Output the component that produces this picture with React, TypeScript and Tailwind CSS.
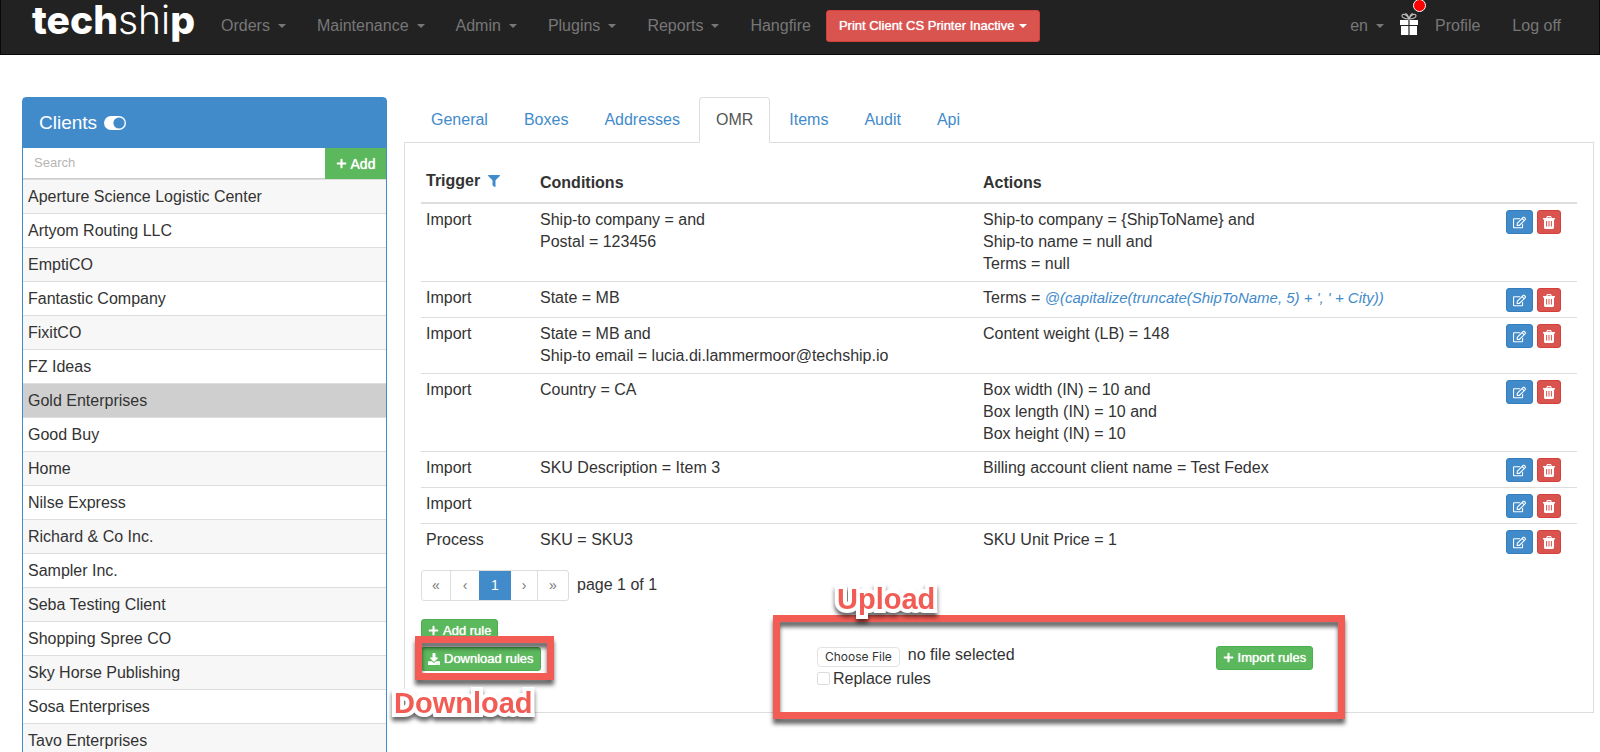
import { useState } from "react";
import type { ReactNode } from "react";
import { FaDownload, FaFilter, FaPlus, FaRegEdit } from "react-icons/fa";
import { clsx } from "clsx";

interface Rule {
  trigger: string;
  conditions: string[];
  actions: ReactNode[];
}

const menus = ["Orders", "Maintenance", "Admin", "Plugins", "Reports"];

const clients = [
  "Aperture Science Logistic Center",
  "Artyom Routing LLC",
  "EmptiCO",
  "Fantastic Company",
  "FixitCO",
  "FZ Ideas",
  "Gold Enterprises",
  "Good Buy",
  "Home",
  "Nilse Express",
  "Richard & Co Inc.",
  "Sampler Inc.",
  "Seba Testing Client",
  "Shopping Spree CO",
  "Sky Horse Publishing",
  "Sosa Enterprises",
  "Tavo Enterprises",
];

const tabs = ["General", "Boxes", "Addresses", "OMR", "Items", "Audit", "Api"];

const rules: Rule[] = [
  {
    trigger: "Import",
    conditions: ["Ship-to company = and", "Postal = 123456"],
    actions: ["Ship-to company = {ShipToName} and", "Ship-to name = null and", "Terms = null"],
  },
  {
    trigger: "Import",
    conditions: ["State = MB"],
    actions: [
      <>
        Terms ={" "}
        <em className="text-[15px] text-[#428bca]">
          @(capitalize(truncate(ShipToName, 5) + ', ' + City))
        </em>
      </>,
    ],
  },
  {
    trigger: "Import",
    conditions: ["State = MB and", "Ship-to email = lucia.di.lammermoor@techship.io"],
    actions: ["Content weight (LB) = 148"],
  },
  {
    trigger: "Import",
    conditions: ["Country = CA"],
    actions: ["Box width (IN) = 10 and", "Box length (IN) = 10 and", "Box height (IN) = 10"],
  },
  {
    trigger: "Import",
    conditions: ["SKU Description = Item 3"],
    actions: ["Billing account client name = Test Fedex"],
  },
  { trigger: "Import", conditions: [], actions: [] },
  { trigger: "Process", conditions: ["SKU = SKU3"], actions: ["SKU Unit Price = 1"] },
];

const Caret = () => (
  <span className="inline-block border-x-4 border-t-4 border-x-transparent border-t-current" />
);

const GiftIcon = () => (
  <svg viewBox="0 0 20 24" className="h-6 w-5" fill="#fff">
    <path
      d="M10 7C8 2 3 1 3 4c0 2 4 3 7 3s7-1 7-3c0-3-5-2-7 3zM10 7C9 3 7 1 6 2M10 7c1-4 3-6 4-5"
      fill="none"
      stroke="#bbb"
      strokeWidth="1.2"
    />
    <path d="M1 8h8.4v5H1zM10.6 8H19v5h-8.4zM2 14h7.4v9H2zM10.6 14H18v9h-7.4z" />
  </svg>
);

const ToggleIcon = () => (
  <svg viewBox="0 0 22 14" className="h-[14px] w-[22px]">
    <rect width="22" height="14" rx="7" fill="#fff" />
    <circle cx="15" cy="7" r="5.6" fill="#428bca" />
  </svg>
);

const TrashIcon = () => (
  <svg viewBox="0 0 12 13" className="h-[13px] w-3" fill="#fff">
    <path d="M4 0h4l.8 2H12v1.4h-1V11.400a1.600 1.600 0 0 1-1.600 1.600H2.600A1.600 1.600 0 0 1 1 11.400V3.400H0V2h3.200z" />
    <path d="M4.600 1.200h2.800l.3.8H4.300z" fill="#d9534f" />
    <path d="M3.600 5v5.500M6 5v5.500M8.400 5v5.500" stroke="#d9534f" strokeWidth="1" />
  </svg>
);

const NavBar = () => (
  <nav className="flex h-[55px] shrink-0 items-center border border-t-0 border-[#090909] bg-[#222] pr-[38px] pb-[2px] pl-[31px] text-[#777]">
    <a
      href="#"
      className="-mt-[3px] flex w-[174px] items-baseline self-start font-[Inter,sans-serif] text-[39px] leading-[46px] text-white"
    >
      <span className="font-extrabold">tech</span>
      <span className="font-light">shi</span>
      <span className="font-extrabold">p</span>
    </a>
    <div className="flex items-center gap-px">
      {menus.map((menu) => (
        <button key={menu} type="button" className="flex items-center gap-2 px-[15px]">
          {menu} <Caret />
        </button>
      ))}
      <a href="#" className="px-[15px]">
        Hangfire
      </a>
    </div>
    <button
      type="button"
      className="flex h-8 items-center gap-[5px] rounded-[3px] border border-[#d43f3a] bg-[#d9534f] px-3 text-[13px] text-white [text-shadow:0_0_1px_white]"
    >
      Print Client CS Printer Inactive <Caret />
    </button>
    <button type="button" className="ml-auto flex items-center gap-2 px-[15px]">
      en <Caret />
    </button>
    <a href="#" aria-label="What's new" className="relative mb-1">
      <GiftIcon />
      <span className="absolute -top-[13px] left-[14px] size-[13px] rounded-full border border-white bg-[#f00]" />
    </a>
    <a href="#" className="px-4">
      Profile
    </a>
    <a href="#" className="pl-4">
      Log off
    </a>
  </nav>
);

const ClientList = () => {
  const [selected, setSelected] = useState("Gold Enterprises");

  return (
    <aside className="w-[365px] shrink-0 rounded-t border border-[#428bca]">
      <h2 className="flex h-[50px] items-center gap-[7px] bg-[#428bca] px-4 text-[19px] text-white">
        Clients <ToggleIcon />
      </h2>
      <div className="flex h-[31px]">
        <input
          type="text"
          aria-label="Search clients"
          placeholder="Search"
          className="min-w-0 flex-1 border-b border-[#ccc] px-[11px] text-[13px] outline-none placeholder:text-[#b5b5b5]"
        />
        <button
          type="button"
          className="flex w-[61px] items-center justify-center gap-1 bg-[#5cb85c] text-sm text-white [text-shadow:0_0_1px_white]"
        >
          <FaPlus size={11} /> Add
        </button>
      </div>
      <ul>
        {clients.map((client) => (
          <li key={client} className="border-t border-[#ddd] odd:bg-[#f7f7f7]">
            <button
              type="button"
              onClick={() => setSelected(client)}
              className={clsx(
                "block h-[33px] w-full px-[5px] text-left",
                client === selected && "bg-[#cfcfcf]",
              )}
            >
              {client}
            </button>
          </li>
        ))}
      </ul>
    </aside>
  );
};

const GreenButton = ({ icon, children }: { icon: ReactNode; children: ReactNode }) => (
  <button
    type="button"
    className="flex h-6 items-center gap-1 rounded-[3px] border border-[#4cae4c] bg-[#5cb85c] px-[6px] text-[13px] text-white [text-shadow:0_0_1px_white]"
  >
    {icon} {children}
  </button>
);

// Red frame drawn over the part of the page it calls out
const Frame = ({ className }: { className: string }) => (
  <div
    className={clsx(
      "pointer-events-none absolute border-7 border-[#f25c54] drop-shadow-[0_5px_2px_rgba(0,0,0,0.6)]",
      className,
    )}
  />
);

const Callout = ({ className, children }: { className: string; children: ReactNode }) => (
  <span
    className={clsx(
      "pointer-events-none absolute text-[29px] leading-8 font-bold text-[#f25c54] drop-shadow-[0_4px_2px_rgba(0,0,0,0.6)] [-webkit-text-stroke:8px_white] [paint-order:stroke_fill]",
      className,
    )}
  >
    {children}
  </span>
);

const RulesTable = () => (
  <table className="w-full table-fixed border-collapse text-left leading-[22px]">
    <colgroup>
      <col className="w-[114px]" />
      <col className="w-[443px]" />
      <col />
      <col className="w-20" />
    </colgroup>
    <thead>
      <tr className="h-11 border-b-2 border-[#ddd]">
        <th className="px-[5px]">
          <span className="flex items-center gap-2">
            Trigger <FaFilter size={12} className="text-[#428bca]" />
          </span>
        </th>
        <th className="px-[5px] pt-1">Conditions</th>
        <th className="px-[5px] pt-1">Actions</th>
        <th aria-label="Edit or delete" />
      </tr>
    </thead>
    <tbody>
      {rules.map((rule, i) => (
        <tr key={i} className="h-9 border-t border-[#ddd] align-top">
          <td className="px-[5px] pt-[5px] pb-[6px]">{rule.trigger}</td>
          <td className="px-[5px] pt-[5px] pb-[6px]">
            {rule.conditions.map((line, j) => (
              <div key={j}>{line}</div>
            ))}
          </td>
          <td className="px-[5px] pt-[5px] pb-[6px]">
            {rule.actions.map((line, j) => (
              <div key={j}>{line}</div>
            ))}
          </td>
          <td className="px-[5px] pt-[6px] pb-[5px]">
            <div className="flex gap-1 pl-1 text-white">
              <button
                type="button"
                aria-label="Edit rule"
                className="flex h-6 w-[27px] items-center justify-center rounded-[3px] border border-[#357ebd] bg-[#428bca]"
              >
                <FaRegEdit size={13} />
              </button>
              <button
                type="button"
                aria-label="Delete rule"
                className="flex h-6 w-6 items-center justify-center rounded-[3px] border border-[#d43f3a] bg-[#d9534f]"
              >
                <TrashIcon />
              </button>
            </div>
          </td>
        </tr>
      ))}
    </tbody>
  </table>
);

const Pagination = () => (
  <div className="mt-[10px] flex items-center gap-2">
    <div className="flex h-[31px] overflow-hidden rounded-[3px] border border-[#ddd] text-sm text-[#777]">
      <button type="button" className="w-[29px] border-r border-[#ddd]">«</button>
      <button type="button" className="w-[28px]">‹</button>
      <button type="button" className="w-8 bg-[#428bca] text-white">1</button>
      <button type="button" className="w-[27px] border-r border-[#ddd]">›</button>
      <button type="button" className="w-[30px]">»</button>
    </div>
    page 1 of 1
  </div>
);

const ImportForm = () => (
  <form className="relative -mb-[7px] flex w-[49.5%] items-start justify-between pt-7 pr-8 pb-7 pl-11">
    <div>
      <label className="flex h-6 items-center gap-2">
        <input type="file" className="sr-only" />
        <span className="mt-1 flex h-5 items-center rounded border border-[#e2e2e2] px-[7px] font-[Inter,sans-serif] text-xs">
          Choose File
        </span>
        no file selected
      </label>
      <label className="flex h-6 items-center gap-[3px]">
        <input
          type="checkbox"
          className="size-[13px] appearance-none rounded-[2px] border border-[#ddd] bg-white checked:bg-[#428bca]"
        />
        Replace rules
      </label>
    </div>
    <div className="mt-[3px]">
      <GreenButton icon={<FaPlus size={11} />}>Import rules</GreenButton>
    </div>
    <Frame className="inset-0" />
    <Callout className="-top-8 left-16">Upload</Callout>
  </form>
);

export default function App() {
  const [activeTab, setActiveTab] = useState("OMR");

  return (
    <div className="flex h-screen flex-col overflow-hidden bg-white font-['Liberation_Sans',Arial,sans-serif] text-base text-[#333]">
      <NavBar />
      <div className="flex items-start gap-[17px] pt-[42px] pr-[6px] pl-[22px]">
        <ClientList />
        <main className="min-w-0 flex-1">
          <div role="tablist" className="flex gap-[2px] pl-[10px]">
            {tabs.map((tab) => (
              <button
                key={tab}
                type="button"
                role="tab"
                aria-selected={tab === activeTab}
                onClick={() => setActiveTab(tab)}
                className={clsx(
                  "-mb-px h-[46px] rounded-t border px-4",
                  tab === activeTab
                    ? "relative border-[#ddd] border-b-white bg-white text-[#555]"
                    : "border-transparent text-[#428bca]",
                )}
              >
                {tab}
              </button>
            ))}
          </div>
          <section className="border border-[#ddd] px-4 pt-4">
            <RulesTable />
            <Pagination />
            <div className="mt-[14px] flex">
              <div className="flex w-[352px] shrink-0 flex-col items-start gap-1 pt-1">
                <GreenButton icon={<FaPlus size={11} />}>Add rule</GreenButton>
                <div className="relative">
                  <GreenButton icon={<FaDownload size={12} />}>Download rules</GreenButton>
                  <Frame className="-top-[11px] -right-[13px] -bottom-[9px] -left-[6px]" />
                  <Callout className="top-10 -left-[27px]">Download</Callout>
                </div>
              </div>
              <ImportForm />
            </div>
          </section>
        </main>
      </div>
    </div>
  );
}
